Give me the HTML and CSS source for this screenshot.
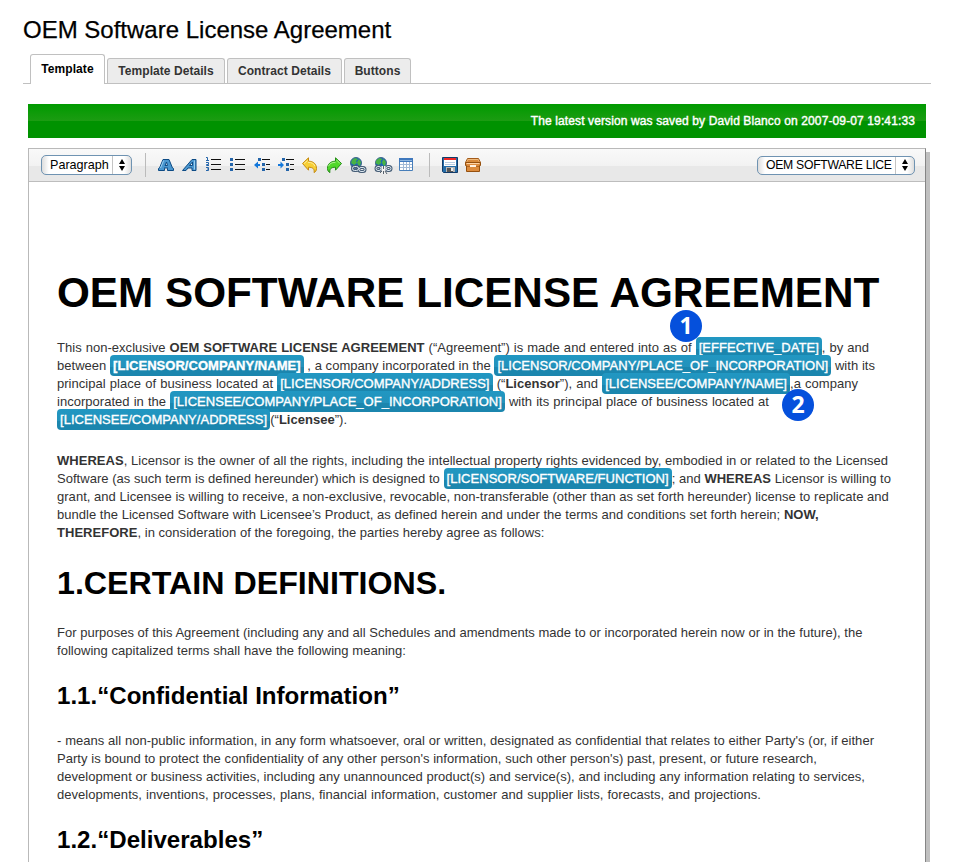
FILE: index.html
```html
<!DOCTYPE html>
<html lang="en">
<head>
<meta charset="utf-8">
<title>OEM Software License Agreement</title>
<link rel="stylesheet" href="styles.css">
</head>
<body>
<h1 class="page-title"><span>OEM Software License Agreement</span></h1>
<nav class="tabs">
  <a class="tab active">Template</a>
  <a class="tab t2">Template Details</a>
  <a class="tab t3">Contract Details</a>
  <a class="tab t4">Buttons</a>
</nav>
<div class="notice">The latest version was saved by David Blanco on 2007-09-07 19:41:33</div>
<main class="editor">
  <div class="toolbar">
    <div class="select paragraph"><span class="label">Paragraph</span><svg class="arrows" width="8" height="12" viewBox="0 0 8 12"><path d="M4 0l3 5H1zM4 12l3-5H1z"/></svg></div>
    <i class="sep"></i>
    <div class="icons">
      <svg width="16" height="16" viewBox="0 0 16 16"><path fill="#4a97d0" stroke="#0d4b85" fill-rule="evenodd" d="M.5 13.500v-2l1-.5L5 2.500h6L14.500 11l1 .5v2H9.500v-2l.5-.5H6l.5.5v2zM7 8.500h2.500L8.500 5z"/><path stroke="#9cd0f2" d="M5.600 3.500L2.500 11"/></svg>
      <svg width="16" height="16" viewBox="0 0 16 16"><path fill="#4a97d0" stroke="#0d4b85" fill-rule="evenodd" d="M.5 13.500L10 2.500h4v11h-4V11H6l-2 2.500zM7.500 8.500H10.500V5z"/><path stroke="#9cd0f2" d="M12.500 3.500v9"/></svg>
      <svg width="16" height="16" viewBox="1 1 16 16"><path stroke="#111" d="M6 3.500h10M6 8.500h10M6 13.500h10"/><path fill="none" stroke="#2465aa" d="M1 1.500h1.500V5M1 4.500h3M1 6.500h2.500v2H1.500v1H4M1 11.500h2.500v1.500H2m1.500 0v1.500H1"/></svg>
      <svg width="16" height="16" viewBox="1 1 16 16"><path stroke="#111" d="M6 3.500h10M6 8.500h10M6 13.500h10"/><path fill="#2465aa" d="M1 2h3v3H1zM1 7h3v3H1zM1 12h3v3H1z"/></svg>
      <svg width="16" height="16" viewBox="0 1 16 16"><path stroke="#111" d="M8 3.500h8M12 8.500h4M12 13.500h4"/><path fill="#2465aa" d="M4 2h3v3H4zM8 7h3v3H8zM8 12h3v3H8z"/><path fill="#1378dc" d="M0 9l4-3.500V8h2v2H4v2.500z"/></svg>
      <svg width="16" height="16" viewBox="0 1 16 16"><path stroke="#111" d="M8 3.500h8M12 8.500h4M12 13.500h4"/><path fill="#2465aa" d="M4 2h3v3H4zM8 7h3v3H8zM8 12h3v3H8z"/><path fill="#1378dc" d="M6 9L2.500 5.500V8H0v2h2.500v2.500z"/></svg>
      <svg width="16" height="16" viewBox="0 0 16 16"><path fill="#f7cf36" stroke="#c58a10" d="M.5 6.500L6.500.8v3.400c5 0 8 3 8 7.300 0 2-1 3.500-2.500 4 .8-3.500-1.200-5.300-5.500-5.300v3z"/><path fill="none" stroke="#fff0a0" d="M2 6.500l3.500-3M6 5.300c3.500 0 6 1.200 7 4"/></svg>
      <svg width="16" height="16" viewBox="0 0 16 16"><path fill="#50d82a" stroke="#238b16" d="M15.500 6.500L9.500.8v3.400c-5 0-8 3-8 7.300 0 2 1 3.500 2.500 4-.8-3.500 1.200-5.300 5.500-5.300v3z"/><path fill="none" stroke="#b1f594" d="M10.500 3l3.500 3.500M9.500 5.300c-3.500 0-6 1.200-7 4"/></svg>
      <svg width="16" height="16" viewBox="0 0 16 16"><circle cx="6" cy="6" r="5.500" fill="#1d65b5" stroke="#40688d"/><path fill="#48b344" d="M2 3l3-2 3 1-2 2 1 2-3 2-3-2zM9 2l2 3-1 4-2-1-1-3z"/><g fill="none" stroke="#465d76" stroke-width="3"><rect x="2.500" y="9.500" width="6" height="4" rx="2"/><rect x="9" y="10.500" width="6" height="4" rx="2"/></g><g fill="none" stroke="#dce7ef"><rect x="2.500" y="9.500" width="6" height="4" rx="2"/><rect x="9" y="10.500" width="6" height="4" rx="2"/></g></svg>
      <svg width="16" height="16" viewBox="0 0 16 16"><circle cx="7" cy="6" r="5.500" fill="#1d65b5" stroke="#40688d"/><path fill="#48b344" d="M2.500 3l3-2 3 1-2 2 1 2-3 2-3-2zM9.500 2l2.500 3-1 4-2-1-1-3z"/><g fill="none" stroke="#465d76" stroke-width="3"><rect x="2" y="9.500" width="5" height="4" rx="2"/><rect x="12" y="9.500" width="5" height="4" rx="2"/></g><g fill="none" stroke="#dce7ef"><rect x="2" y="9.500" width="5" height="4" rx="2"/><rect x="12" y="9.500" width="5" height="4" rx="2"/></g><path fill="#f2f2f2" d="M7.500 9h4v8h-4z"/><path stroke="#56616c" d="M9.500 9v3M9.500 14v3M6 16l2-2M13 17l-2-3"/></svg>
      <svg width="16" height="16" viewBox="0 0 16 16"><path fill="#fff" stroke="#477eb9" d="M1.500 1.500h13v12h-13z"/><path fill="#3f78bd" d="M1 1h14v4H1z"/><path stroke="#8db5df" d="M2 3.500h12"/><path stroke="#a1b9d6" d="M2 7.500h12M2 10.500h12M5.500 5v8M8.500 5v8M11.500 5v8"/></svg>
    </div>
    <i class="sep second"></i>
    <div class="icons file">
      <svg width="16" height="16" viewBox="0 0 16 16"><path fill="#246da9" stroke="#113b68" d="M.5.500h15v15h-14l-1-1z"/><path fill="#fff" d="M2 1h12v8H2z"/><path fill="#ed2828" d="M2 1h12v2H2z"/><path stroke="#b9cce0" d="M3 5.500h10M3 7.500h10"/><path fill="#b5b5b5" d="M4 10h9v5H4z"/><path fill="#555" d="M5 11h6v4H5z"/><path fill="#eee" d="M9 11h2v3H9z"/></svg>
      <svg width="16" height="16" viewBox="0 0 16 16"><path fill="#f0bb7d" stroke="#a35b1a" d="M2.500 1.500h11l2 4h-15z"/><path fill="#d88a3c" d="M3 3h10l1 2H2z"/><path fill="#dc8b3d" stroke="#95500f" d="M.5 5.500h15v3h-1v6h-13v-6h-1z"/><path stroke="#ffd3a2" d="M1.500 6.500h13"/><path stroke="#b36824" d="M2 9.500h12"/><rect x="5" y="8" width="6" height="2" fill="#fff2e3"/></svg>
    </div>
    <div class="select section"><span class="label">OEM SOFTWARE LICE</span><svg class="arrows" width="8" height="12" viewBox="0 0 8 12"><path d="M4 0l3 5H1zM4 12l3-5H1z"/></svg></div>
  </div>
  <article class="document">
    <h1 class="doc-title"><span>OEM SOFTWARE LICENSE AGREEMENT</span></h1>
    <p class="parties">
      <span class="line">This non-exclusive <b>OEM SOFTWARE LICENSE AGREEMENT</b> (“Agreement”) is made and entered into as of <span class="tag">[EFFECTIVE_DATE]</span>, by and</span>
      <span class="line">between <b class="tag">[LICENSOR/COMPANY/NAME]</b> , a company incorporated in the <span class="tag">[LICENSOR/COMPANY/PLACE_OF_INCORPORATION]</span> with its</span>
      <span class="line">principal place of business located at <span class="tag">[LICENSOR/COMPANY/ADDRESS]</span> (“<b>Licensor</b>”), and <span class="tag">[LICENSEE/COMPANY/NAME]</span>,a company</span>
      <span class="line">incorporated in the <span class="tag">[LICENSEE/COMPANY/PLACE_OF_INCORPORATION]</span> with its principal place of business located at</span>
      <span class="line"><span class="tag">[LICENSEE/COMPANY/ADDRESS]</span>(“<b>Licensee</b>”).</span>
    </p>
    <p class="whereas">
      <span class="line"><b>WHEREAS</b>, Licensor is the owner of all the rights, including the intellectual property rights evidenced by, embodied in or related to the Licensed</span>
      <span class="line">Software (as such term is defined hereunder) which is designed to <span class="tag">[LICENSOR/SOFTWARE/FUNCTION]</span>; and <b>WHEREAS</b> Licensor is willing to</span>
      <span class="line">grant, and Licensee is willing to receive, a non-exclusive, revocable, non-transferable (other than as set forth hereunder) license to replicate and</span>
      <span class="line">bundle the Licensed Software with Licensee’s Product, as defined herein and under the terms and conditions set forth herein; <b>NOW,</b></span>
      <span class="line"><b>THEREFORE</b>, in consideration of the foregoing, the parties hereby agree as follows:</span>
    </p>
    <h2><span>1.CERTAIN DEFINITIONS.</span></h2>
    <p class="purposes">
      <span class="line">For purposes of this Agreement (including any and all Schedules and amendments made to or incorporated herein now or in the future), the</span>
      <span class="line">following capitalized terms shall have the following meaning:</span>
    </p>
    <h3><span>1.1.“Confidential Information”</span></h3>
    <p class="confidential">
      <span class="line">- means all non-public information, in any form whatsoever, oral or written, designated as confidential that relates to either Party's (or, if either</span>
      <span class="line">Party is bound to protect the confidentiality of any other person's information, such other person's) past, present, or future research,</span>
      <span class="line">development or business activities, including any unannounced product(s) and service(s), and including any information relating to services,</span>
      <span class="line">developments, inventions, processes, plans, financial information, customer and supplier lists, forecasts, and projections.</span>
    </p>
    <h3><span>1.2.“Deliverables”</span></h3>
    <svg class="pin one" width="32" height="32"><circle cx="16" cy="16" r="16"/><text x="16" y="24">1</text></svg>
    <svg class="pin two" width="32" height="32"><circle cx="16" cy="16" r="16"/><text x="16" y="24">2</text></svg>
  </article>
</main>
</body>
</html>
```
FILE: styles.css
```css
* { box-sizing: border-box; }
html { overflow: hidden; }
body {
  margin: 0;
  height: 862px;
  overflow: hidden;
  background: #fff;
  color: #333;
  font-family: "Liberation Sans", Arial, sans-serif;
  font-size: 12px;
}
h1, h2, h3, p { margin: 0; }
.page-title {
  height: 54px;
  padding: 16px 0 0 23px;
  color: #000;
  font-size: 24px;
  line-height: 28px;
  font-weight: 400;
  white-space: nowrap;
  -webkit-text-stroke: .25px #000;
}
.tabs {
  display: flex;
  align-items: flex-end;
  gap: 2px;
  height: 30px;
  width: 908px;
  margin-left: 23px;
  padding-left: 7px;
  border-bottom: 1px solid #c0c0c0;
}
.tab {
  height: 25px;
  border: 1px solid #c0c0c0;
  border-bottom: 0;
  border-radius: 3px 3px 0 0;
  background: #ececec;
  text-align: center;
  font-weight: 700;
  line-height: 25px;
  letter-spacing: .06px;
  white-space: nowrap;
}
.tab.active {
  width: 75px;
  height: 30px;
  margin-bottom: -1px;
  background: #fff;
  color: #000;
  line-height: 28px;
}
.t2 { width: 118px; }
.t3 { width: 115px; }
.t4 { width: 67px; }
.notice {
  width: 898px;
  height: 34px;
  margin: 20px 0 10px 28px;
  padding-right: 11px;
  background: linear-gradient(#009a00, #1c9c12 50%, #009200 50%, #009200);
  color: #fff;
  text-align: right;
  line-height: 34px;
  letter-spacing: .12px;
  -webkit-text-stroke: .4px #fff;
}
.editor {
  width: 898px;
  height: 730px;
  margin-left: 28px;
  border: 1px solid #b9b9b9;
  border-right-color: #858585;
  box-shadow: 4px 4px 0 #c0c0c0;
}
.toolbar {
  display: flex;
  align-items: center;
  height: 33px;
  padding: 0 10px 0 12px;
  border-bottom: 1px solid #bdbdbd;
  background: linear-gradient(#f9f9f9, #f2f2f2 53%, #e8e8e8 53%, #e8e8e8);
}
.select {
  display: flex;
  align-items: center;
  height: 20px;
  border: 1px solid #6f93b2;
  border-radius: 5px;
  background: linear-gradient(90deg, #ddd, #fff 7px, #fff calc(100% - 7px), #ddd);
  color: #000;
  font-size: 12.600px;
  white-space: nowrap;
}
.label {
  flex: 1;
  height: 18px;
  padding-left: 8px;
  border-right: 1px solid #c4c4c4;
  line-height: 18px;
}
.arrows { flex: none; margin: 0 5px; }
.paragraph { width: 91px; }
.section { width: 158px; height: 19px; margin-left: auto; font-size: 12.200px; letter-spacing: -.27px; }
.section .label { height: 17px; line-height: 17px; }
.sep { width: 1px; height: 24px; margin-left: 13px; background: #bbb; }
.sep.second { margin-left: 15px; }
.icons { display: flex; align-items: center; margin-left: 12px; gap: 8px; }
.icons svg { width: 16px; overflow: visible; }
.icons.file { margin-left: 12px; gap: 7px; }
.document {
  position: relative;
  padding: 84px 0 0 28px;
}
.doc-title {
  height: 73px;
  color: #000;
  font-size: 42.250px;
  line-height: 53px;
  white-space: nowrap;
}
p { margin-bottom: 23px; }
.line {
  display: block;
  height: 18px;
  font-size: 13px;
  line-height: 18px;
  letter-spacing: .03px;
  white-space: nowrap;
  text-align: justify;
  text-align-last: justify;
}
.parties .line:nth-child(1) { width: 812px; }
.parties .line:nth-child(2) { width: 818px; }
.parties .line:nth-child(3) { width: 801px; }
.parties .line:nth-child(4) { width: 712px; }
.parties .line:nth-child(5) { width: 290px; }
.whereas .line:nth-child(1) { width: 831px; }
.whereas .line:nth-child(2) { width: 834px; }
.whereas .line:nth-child(3) { width: 831px; }
.whereas .line:nth-child(4) { width: 761px; }
.whereas .line:nth-child(5) { width: 486px; }
.purposes .line:nth-child(1) { width: 803px; }
.purposes .line:nth-child(2) { width: 349px; }
.confidential .line:nth-child(1) { width: 817px; }
.confidential .line:nth-child(2) { width: 760px; }
.confidential .line:nth-child(3) { width: 808px; }
.confidential .line:nth-child(4) { width: 704px; }
.tag {
  padding: 3px 3px;
  border-radius: 4px;
  background: linear-gradient(#2197c2, #2392bb 58%, #1b86ae 58%, #1b86ae);
  color: #fff;
  -webkit-text-stroke: .35px #fff;
}
h2 {
  height: 60px;
  margin-top: -1px;
  color: #000;
  font-size: 32.200px;
  line-height: 38px;
  white-space: nowrap;
}
h3 {
  height: 50px;
  margin-top: -1px;
  color: #000;
  font-size: 24.100px;
  line-height: 28px;
  white-space: nowrap;
}
.pin { position: absolute; fill: #0550dc; }
.pin text {
  fill: #fff;
  font: 700 23px "Open Sans", sans-serif;
  text-anchor: middle;
}
.pin.one { left: 641px; top: 128px; }
.pin.two { left: 753px; top: 207px; }
```
